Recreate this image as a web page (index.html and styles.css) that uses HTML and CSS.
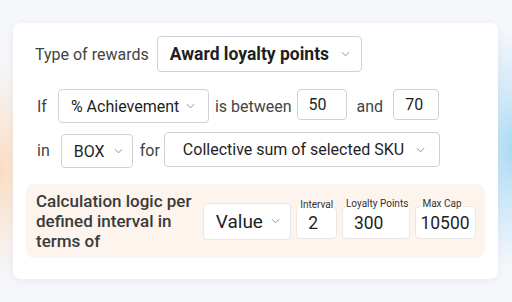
FILE: index.html
```html
<!DOCTYPE html>
<html lang="en">
<head>
  <meta charset="UTF-8" />
  <meta name="viewport" content="width=device-width, initial-scale=1.0" />
  <title>Reward rule</title>
  <link rel="stylesheet" href="styles.css">
</head>
<body>
  <div class="card">
    <!-- Reward type -->
    <div class="row row-type">
      <span class="label">Type of rewards</span>
      <div class="select select-type">
        <span>Award loyalty points</span>
        <svg class="chev" viewBox="0 0 10 6"><path d="M1 1l4 4 4-4" /></svg>
      </div>
    </div>

    <!-- Condition -->
    <div class="row row-if">
      <span class="label">If</span>
      <div class="select select-metric">
        <span>% Achievement</span>
        <svg class="chev" viewBox="0 0 10 6"><path d="M1 1l4 4 4-4" /></svg>
      </div>
      <span class="label lbl-between">is between</span>
      <div class="box box-from">50</div>
      <span class="label lbl-and">and</span>
      <div class="box box-to">70</div>
    </div>

    <div class="row row-in">
      <span class="label">in</span>
      <div class="select select-unit">
        <span>BOX</span>
        <svg class="chev" viewBox="0 0 10 6"><path d="M1 1l4 4 4-4" /></svg>
      </div>
      <span class="label lbl-for">for</span>
      <div class="select select-scope">
        <span>Collective sum of selected SKU</span>
        <svg class="chev" viewBox="0 0 10 6"><path d="M1 1l4 4 4-4" /></svg>
      </div>
    </div>

    <!-- Calculation logic -->
    <div class="calc">
      <p class="calc-text">Calculation logic per defined interval in terms of</p>
      <div class="select select-value">
        <span>Value</span>
        <svg class="chev" viewBox="0 0 10 6"><path d="M1 1l4 4 4-4" /></svg>
      </div>
      <div class="field field-interval">
        <span class="legend">Interval</span>
        <span class="val">2</span>
      </div>
      <div class="field field-points">
        <span class="legend">Loyalty Points</span>
        <span class="val">300</span>
      </div>
      <div class="field field-cap">
        <span class="legend">Max Cap</span>
        <span class="val">10500</span>
      </div>
    </div>
  </div>
</body>
</html>
```

FILE: styles.css
```css
* {
  margin: 0;
  padding: 0;
  box-sizing: border-box;
  font-family: 'Roboto', 'Liberation Sans', sans-serif;
}
html, body {
  width: 512px;
  height: 302px;
  overflow: hidden;
}
body {
  background:
    radial-gradient(ellipse 40px 110px at 0px 170px, #fcdcbf 0%, rgba(252, 220, 191, 0.5) 45%, rgba(252, 220, 191, 0) 100%),
    radial-gradient(ellipse 45px 120px at 512px 150px, #a9daf3 0%, rgba(169, 218, 243, 0.5) 45%, rgba(169, 218, 243, 0) 100%),
    #f5f7fb;
  color: #333;
  padding: 23px 14px 0 13px;
}
.card {
  width: 485px;
  height: 256px;
  background: #fff;
  border-radius: 8px;
  box-shadow: 0 2px 10px rgba(30, 40, 80, 0.06);
  padding: 13px 13px 0 13px;
}
.row {
  display: flex;
  align-items: center;
  padding-left: 9px;
}
.label {
  font-size: 16px;
  color: #444;
}
.select {
  display: flex;
  align-items: center;
  justify-content: space-between;
  border: 1px solid #cfd2d8;
  border-radius: 4px;
  background: #fff;
  color: #1f1f1f;
}
.chev {
  width: 9px;
  height: 6px;
  fill: none;
  stroke: #8892a6;
  stroke-width: 1.1;
}
.box {
  border: 1px solid #cfd2d8;
  border-radius: 4px;
  font-size: 16px;
  color: #1f1f1f;
  height: 31px;
  line-height: 29px;
  padding-left: 11px;
}

/* row 1 */
.row-type {
  height: 36px;
}
.select-type {
  margin-left: 8px;
  width: 205px;
  height: 36px;
  padding: 0 11px 0 12px;
  font-size: 17.5px;
  font-weight: 700;
}

/* row 2 */
.row-if {
  margin-top: 17px;
  height: 34px;
  padding-left: 11px;
}
.select-metric {
  margin-left: 11px;
  width: 151px;
  height: 34px;
  padding: 0 13px 0 12px;
  font-size: 16px;
}
.lbl-between {
  margin-left: 6px;
}
.box-from {
  margin-left: 5px;
  width: 50px;
  align-self: flex-start;
}
.lbl-and {
  margin-left: 10px;
}
.box-to {
  margin-left: 10px;
  width: 46px;
  align-self: flex-start;
}

/* row 3 */
.row-in {
  margin-top: 9px;
  height: 36px;
  padding-left: 11px;
}
.select-unit {
  margin-left: 11px;
  width: 72px;
  height: 34px;
  padding: 0 9px 0 12px;
  font-size: 16px;
  align-self: flex-end;
}
.lbl-for {
  margin-left: 7px;
}
.select-scope {
  margin-left: 4px;
  width: 276px;
  height: 35px;
  padding: 0 14px 0 18px;
  font-size: 16px;
  align-self: flex-start;
}

/* calculation panel */
.calc {
  margin-top: 16px;
  height: 74px;
  background: #fdf4ee;
  border-radius: 8px;
  display: flex;
  align-items: center;
  padding: 0 9px 0 10px;
}
.calc-text {
  width: 165px;
  font-size: 17px;
  line-height: 20px;
  font-weight: 500;
  color: #3a3a3a;
}
.select-value {
  margin-left: 3px;
  width: 89px;
  height: 37px;
  padding: 0 10px 0 12px;
  font-size: 19px;
  border-color: #ebe7e4;
}
.field {
  position: relative;
  margin-left: 5px;
  height: 32px;
  margin-top: 3px;
  border: 1px solid #ebe7e4;
  border-radius: 4px;
  background: #fff;
  font-size: 17.5px;
  color: #1f1f1f;
  display: flex;
  align-items: center;
}
.field .val {
  padding-left: 11px;
}
.legend {
  position: absolute;
  left: 2px;
  top: -9px;
  font-size: 10px;
  color: #333;
  background: linear-gradient(#fdf4ee 50%, #fff 50%);
  padding: 0 1px;
  line-height: 12px;
}
.field-interval {
  width: 41px;
}
.field-points {
  width: 69px;
  height: 33px;
}
.field-cap {
  width: 61px;
  height: 33px;
}
.field-cap .legend {
  left: 5px;
}
.field-cap .val {
  padding-left: 4px;
}
```
